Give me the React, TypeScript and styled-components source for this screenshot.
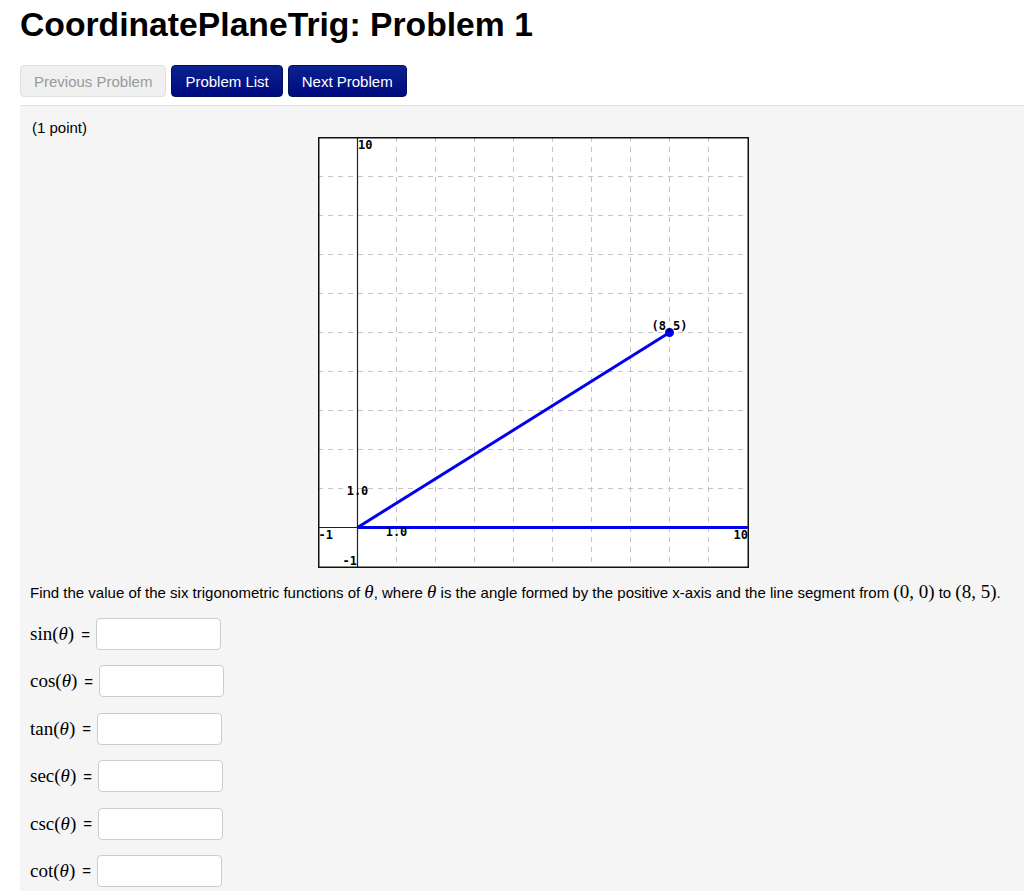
import React from "react";
import styled, { createGlobalStyle } from "styled-components";

const Global = createGlobalStyle`
  html, body { margin: 0; padding: 0; background: #fff; }
  body { font-family: "Liberation Sans", Arial, sans-serif; color: #000; overflow: hidden; }
`;

const Page = styled.div`
  padding: 0 0 0 20px;
  width: 1025px;
`;

const Title = styled.h1`
  margin: 0;
  padding-top: 4px;
  height: 65px;
  box-sizing: border-box;
  font-size: 33.7px;
  font-weight: 700;
  line-height: 40px;
`;

const Nav = styled.div`
  display: flex;
  gap: 5px;
  height: 32px;
  margin-bottom: 8px;
`;

const NavButton = styled.button<{ $disabled?: boolean }>`
  height: 32px;
  padding: 0 13px;
  font-family: "Liberation Sans", Arial, sans-serif;
  font-size: 15px;
  border-radius: 4px;
  border: 1px solid ${(p) => (p.$disabled ? "#e0e0e0" : "#00105c")};
  color: ${(p) => (p.$disabled ? "#999" : "#fff")};
  background: ${(p) =>
    p.$disabled ? "#f0f0f0" : "linear-gradient(#0a2290, #000a80)"};
  cursor: default;
`;

const Panel = styled.div`
  background: #f5f5f5;
  border-top: 1px solid #e3e3e3;
  padding: 12px 0 8px 12px;
  font-size: 15px;
`;

const Points = styled.div`
  line-height: 19px;
  height: 19px;
`;

const Figure = styled.div`
  margin-left: 286px;
  width: 431px;
  height: 431px;
`;

const Prompt = styled.p`
  margin: 12px 0 0 -2px;
  line-height: 24px;
  font-size: 15px;
`;

const M = styled.span`
  font-family: "Liberation Serif", "Times New Roman", serif;
  font-size: 19px;
`;

const MI = styled.i`
  font-family: "Liberation Serif", "Times New Roman", serif;
`;

const Rows = styled.div`
  margin-top: 13px;
`;

const Row = styled.div`
  display: flex;
  align-items: center;
  height: 32px;
  margin: 0 0 15.4px -2px;
`;

const Eq = styled.span`
  margin: 0 6px 0 7px;
`;

const Input = styled.input`
  box-sizing: border-box;
  width: 125px;
  height: 32px;
  border: 1px solid #ccc;
  border-radius: 4px;
  background: #fff;
  padding: 4px 6px;
`;

const GridText = styled.text`
  font-family: "DejaVu Sans Mono", "Liberation Mono", monospace;
  font-weight: 700;
  font-size: 12px;
  fill: #000;
`;

function Graph() {
  const u = 39;
  const x0 = 39.5;
  const y0 = 390.5;
  const X = (v: number) => x0 + v * u;
  const Y = (v: number) => y0 - v * u;
  const lines = [];
  for (let i = -1; i <= 10; i++) {
    if (i === 0 || i === -1 || i === 10) continue;
    lines.push(
      <line key={"v" + i} x1={X(i)} y1={0} x2={X(i)} y2={430} stroke="#c4c4c4" strokeDasharray="5 5" />
    );
    lines.push(
      <line key={"h" + i} x1={0} y1={Y(i)} x2={430} y2={Y(i)} stroke="#c4c4c4" strokeDasharray="5 5" />
    );
  }
  return (
    <svg width={431} height={431} viewBox="0 0 431 431">
      <rect x={0} y={0} width={431} height={431} fill="#fff" />
      {lines}
      <line x1={X(0)} y1={0} x2={X(0)} y2={430} stroke="#222" strokeWidth={1.2} />
      <line x1={0} y1={Y(0)} x2={430} y2={Y(0)} stroke="#222" strokeWidth={1.2} />
      <line x1={X(0)} y1={Y(0)} x2={X(10)} y2={Y(0)} stroke="#0000ee" strokeWidth={3} />
      <line x1={X(0)} y1={Y(0)} x2={X(8)} y2={Y(5)} stroke="#0000ee" strokeWidth={3} />
      <circle cx={X(8)} cy={Y(5)} r={4.5} fill="#0000ee" />
      <rect x={0.75} y={0.75} width={429.5} height={429.5} fill="none" stroke="#111" strokeWidth={1.5} />
      <GridText x={X(0) + 0.5} y={12}>10</GridText>
      <GridText x={X(0)} y={Y(1) + 6} textAnchor="middle">1.0</GridText>
      <GridText x={X(1)} y={Y(0) + 8} textAnchor="middle">1.0</GridText>
      <GridText x={0.5} y={Y(0) + 11}>-1</GridText>
      <GridText x={430} y={Y(0) + 11} textAnchor="end">10</GridText>
      <GridText x={X(0) - 0.5} y={Y(-1) - 2} textAnchor="end">-1</GridText>
      <GridText x={X(8)} y={Y(5) - 3} textAnchor="middle">(8,5)</GridText>
    </svg>
  );
}

const fns = ["sin", "cos", "tan", "sec", "csc", "cot"];

export default function App() {
  return (
    <Page>
      <Global />
      <Title>CoordinatePlaneTrig: Problem 1</Title>
      <Nav>
        <NavButton $disabled>Previous Problem</NavButton>
        <NavButton>Problem List</NavButton>
        <NavButton>Next Problem</NavButton>
      </Nav>
      <Panel>
        <Points>(1 point)</Points>
        <Figure>
          <Graph />
        </Figure>
        <Prompt>
          Find the value of the six trigonometric functions of <M><MI>θ</MI></M>, where{" "}
          <M><MI>θ</MI></M> is the angle formed by the positive x-axis and the line segment from{" "}
          <M>(0, 0)</M> to <M>(8, 5)</M>.
        </Prompt>
        <Rows>
          {fns.map((f) => (
            <Row key={f}>
              <M>
                {f}(<MI>θ</MI>)
              </M>
              <Eq>=</Eq>
              <Input type="text" />
            </Row>
          ))}
        </Rows>
      </Panel>
    </Page>
  );
}
